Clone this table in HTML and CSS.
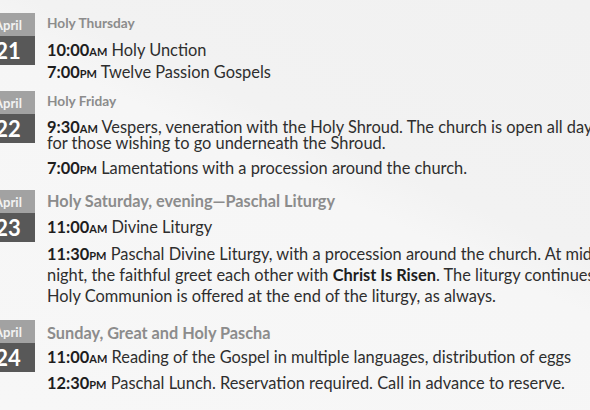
FILE: index.html
```html
<!DOCTYPE html>
<html lang="en">
<head>
<meta charset="utf-8">
<title>Holy Week Schedule</title>
<link rel="stylesheet" href="styles.css">
</head>
<body>
<main class="schedule">
  <section class="day day-thu">
    <div class="badge"><div class="month">April</div><div class="date">21</div></div>
    <div class="events">
      <h2 class="title">Holy Thursday</h2>
      <p class="ev"><b>10:00<span class="ap">am</span></b> Holy Unction</p>
      <p class="ev"><b>7:00<span class="ap">pm</span></b> Twelve Passion Gospels</p>
    </div>
  </section>
  <section class="day day-fri">
    <div class="badge"><div class="month">April</div><div class="date">22</div></div>
    <div class="events">
      <h2 class="title">Holy Friday</h2>
      <p class="ev ev-tight"><b>9:30<span class="ap">am</span></b> Vespers, veneration with the Holy Shroud. The church is open all day<br>for those wishing to go underneath the Shroud.</p>
      <p class="ev ev-after"><b>7:00<span class="ap">pm</span></b> Lamentations with a procession around the church.</p>
    </div>
  </section>
  <section class="day day-sat">
    <div class="badge"><div class="month">April</div><div class="date">23</div></div>
    <div class="events">
      <h2 class="title title-lg">Holy Saturday, evening—Paschal Liturgy</h2>
      <p class="ev"><b>11:00<span class="ap">am</span></b> Divine Liturgy</p>
      <p class="ev ev-loose"><b>11:30<span class="ap">pm</span></b> Paschal Divine Liturgy, with a procession around the church. At mid-<br>night, the faithful greet each other with <b>Christ Is Risen</b>. The liturgy continues.<br>Holy Communion is offered at the end of the liturgy, as always.</p>
    </div>
  </section>
  <section class="day day-sun">
    <div class="badge"><div class="month">April</div><div class="date">24</div></div>
    <div class="events">
      <h2 class="title title-lg">Sunday, Great and Holy Pascha</h2>
      <p class="ev"><b>11:00<span class="ap">am</span></b> Reading of the Gospel in multiple languages, distribution of eggs</p>
      <p class="ev ev-last"><b>12:30<span class="ap">pm</span></b> Paschal Lunch. Reservation required. Call in advance to reserve.</p>
    </div>
  </section>
</main>
</body>
</html>
```

FILE: styles.css
```css
html, body {
  margin: 0;
  padding: 0;
}
body {
  width: 590px;
  height: 410px;
  overflow: hidden;
  background: linear-gradient(205deg, #f1f1f1 0%, #f2f2f2 38%, #f6f6f6 46%, #f7f7f7 100%);
  font-family: Lato, "Open Sans", sans-serif;
  color: #2e2e2e;
}
.schedule {
  display: flex;
  flex-direction: column;
  padding-top: 13px;
}
.day {
  display: flex;
  align-items: flex-start;
}
.day-fri { margin-top: 8px; }
.day-sat { margin-top: 11px; }
.day-sun { margin-top: 14px; }

.badge {
  width: 54px;
  margin-left: -19px;
  flex: none;
  display: flex;
  flex-direction: column;
  text-align: center;
  color: #fff;
}
.month {
  height: 23px;
  line-height: 24px;
  background: #a2a2a2;
  font-size: 13px;
  font-weight: 700;
  color: #f2f2f2;
}
.date {
  height: 29px;
  line-height: 29px;
  background: #585858;
  font-size: 22px;
  font-weight: 700;
}
.events {
  margin-left: 12px;
  padding-top: 2px;
  display: flex;
  flex-direction: column;
  white-space: nowrap;
}
.day-sat .events { padding-top: 3px; }
.day-sun .events { padding-top: 5px; }
.title {
  margin: 0 0 8px;
  font-size: 13.7px;
  line-height: 16px;
  font-weight: 700;
  color: #8c8c8c;
}
.title-lg {
  font-size: 16.3px;
}
.day-sat .title { margin-bottom: 7px; }
.day-sun .title { margin-bottom: 5px; }
.ev {
  margin: 0;
  font-size: 16.4px;
  line-height: 22px;
}
.ev b {
  font-weight: 700;
  color: #1e1e1e;
}
.ap {
  font-variant: small-caps;
}
.ev-tight {
  line-height: 16px;
  margin-top: 2px;
}
.ev-after { margin-top: 6px; }
.ev-loose {
  line-height: 21px;
  margin-top: 5px;
}
.ev-last { margin-top: 4px; }
```
